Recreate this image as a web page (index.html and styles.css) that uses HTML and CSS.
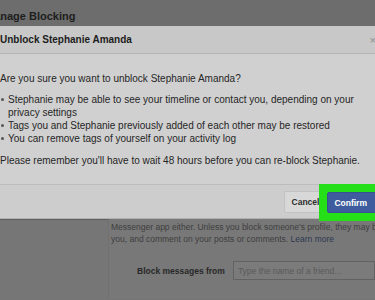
FILE: index.html
```html
<!DOCTYPE html>
<html lang="en">
<head>
    <meta charset="UTF-8">
    <meta name="viewport" content="width=device-width, initial-scale=1.0">
    <title>Manage Blocking</title>
    <link rel="stylesheet" href="styles.css">
</head>
<body>
    <div class="page-head">
        <h1>Manage Blocking</h1>
    </div>

    <div class="dialog">
        <div class="dialog-head">
            <h2>Unblock Stephanie Amanda</h2>
            <span class="close">&times;</span>
        </div>
        <div class="dialog-body">
            <p>Are you sure you want to unblock Stephanie Amanda?</p>
            <ul>
                <li>Stephanie may be able to see your timeline or contact you, depending on your privacy settings</li>
                <li>Tags you and Stephanie previously added of each other may be restored</li>
                <li>You can remove tags of yourself on your activity log</li>
            </ul>
            <p>Please remember you'll have to wait 48 hours before you can re-block Stephanie.</p>
        </div>
        <div class="dialog-foot">
            <button class="btn cancel">Cancel</button>
            <div class="highlight">
                <button class="btn confirm">Confirm</button>
            </div>
        </div>
    </div>

    <div class="settings">
        <div class="settings-side"></div>
        <div class="settings-main">
            <p class="note">Messenger app either. Unless you block someone's profile, they may be able to see<br>you, and comment on your posts or comments. <a href="#">Learn more</a></p>
            <div class="field">
                <label for="blockName">Block messages from</label>
                <input type="text" id="blockName" placeholder="Type the name of a friend...">
            </div>
        </div>
    </div>
</body>
</html>
```

FILE: styles.css
```css
body {
    margin: 0;
    width: 375px;
    height: 300px;
    overflow: hidden;
    background-color: #767676;
    font-family: "Liberation Sans", Arial, sans-serif;
    color: #222;
}
.page-head {
    height: 26px;
    background-color: #6d6d6d;
    overflow: hidden;
}
.page-head h1 {
    margin: 0 0 0 -15px;
    padding-top: 10px;
    font-size: 11px;
    line-height: 13px;
    font-weight: bold;
    color: #1e1e1e;
    white-space: nowrap;
}
.dialog {
    background-color: #d0d0d0;
    border-bottom: 1px solid #b0b0b0;
    box-shadow: 0 1px 0 #5f5f5f;
}
.dialog-head {
    display: flex;
    justify-content: space-between;
    align-items: center;
    height: 27px;
    background-color: #c8c8c8;
    border-bottom: 1px solid #b4b4b4;
}
.dialog-head h2 {
    margin: 0;
    font-size: 10px;
    font-weight: bold;
    color: #1d1d1d;
    white-space: nowrap;
}
.close {
    font-size: 11px;
    color: #8f8f8f;
    margin-right: -1px;
}
.dialog-body {
    padding: 18px 0 17px 0;
    font-size: 10px;
    line-height: 13px;
    color: #262626;
}
.dialog-body p {
    margin: 0;
    white-space: nowrap;
}
.dialog-body ul {
    margin: 8px 0 9px 0;
    padding-left: 8px;
}
.dialog-body li {
    position: relative;
    list-style: none;
}
.dialog-body li::before {
    content: "";
    position: absolute;
    left: -7px;
    top: 5px;
    width: 3px;
    height: 3px;
    border-radius: 50%;
    background-color: #555;
}
.dialog-foot {
    display: flex;
    justify-content: flex-end;
    align-items: center;
    height: 33px;
    border-top: 1px solid #bcbcbc;
    background-color: #cdcdcd;
}
.btn {
    font-family: "Liberation Sans", Arial, sans-serif;
    font-size: 8.5px;
    font-weight: bold;
    height: 22px;
    border-radius: 2px;
    cursor: pointer;
}
.cancel {
    background-color: #d8d8d8;
    border: 1px solid #c2c2c2;
    color: #2e2e2e;
    padding: 0 8px 0 7px;
}
.highlight {
    position: relative;
    z-index: 1;
    align-self: flex-start;
    margin: -1px -12px 0 -9px;
    padding: 8px 8px 8px 8px;
    background-color: #25e018;
}
.confirm {
    display: block;
    height: 21px;
    background-color: #3f5d9e;
    border: 1px solid #36528f;
    color: #fff;
    padding: 0 11px 0 6px;
}
.settings {
    display: flex;
    height: 80px;
}
.settings-side {
    width: 108px;
}
.settings-main {
    flex: 1;
    background-color: #787878;
    border-left: 1px solid #707070;
    overflow: hidden;
}
.note {
    margin: 2px 0 0 2px;
    font-size: 8.5px;
    line-height: 12px;
    color: #3e3e3e;
    white-space: nowrap;
}
.note a {
    color: #2c3850;
    text-decoration: none;
}
.field {
    display: flex;
    align-items: center;
    margin-top: 16px;
    padding-left: 28px;
    gap: 8px;
}
.field label {
    font-size: 8.5px;
    font-weight: bold;
    color: #282828;
    white-space: nowrap;
}
.field input {
    flex: 1;
    min-width: 0;
    height: 17px;
    padding: 0 4px;
    border: 1px solid #626262;
    background-color: #7b7b7b;
    font-family: "Liberation Sans", Arial, sans-serif;
    font-size: 8.5px;
    color: #555;
}
.field input::placeholder {
    color: #5a5a5a;
}
```
